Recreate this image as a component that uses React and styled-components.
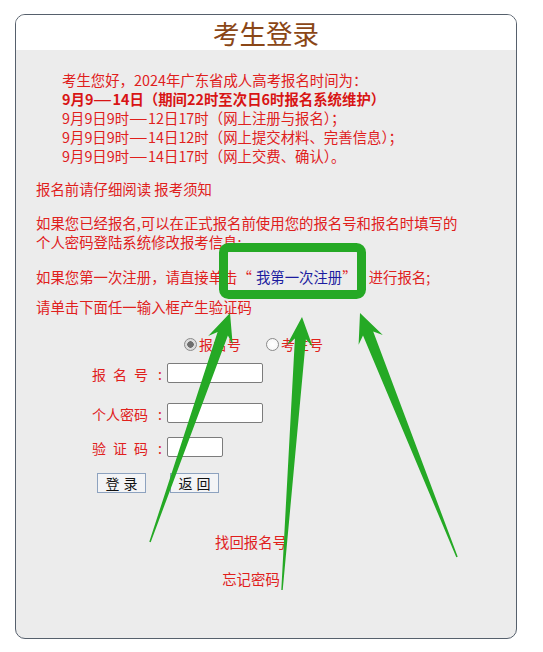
import React from "react";
import styled, { createGlobalStyle } from "styled-components";

const Global = createGlobalStyle`
  html, body { margin: 0; padding: 0; background: #ffffff; }
  body { font-family: "Noto Sans CJK SC", "Noto Sans", sans-serif; }
`;

const Page = styled.div`
  position: relative;
  width: 543px;
  height: 652px;
  padding: 14px 0 0 15px;
  box-sizing: border-box;
`;

const Card = styled.div`
  width: 502px;
  height: 625px;
  box-sizing: border-box;
  border: 1px solid #56606c;
  border-radius: 10px;
  overflow: hidden;
  background: #ececec;
  display: flex;
  flex-direction: column;
`;

const Header = styled.div`
  height: 35px;
  background: #ffffff;
  display: flex;
  align-items: center;
  justify-content: center;
`;

const Title = styled.h1`
  margin: 0;
  font-size: 26.5px;
  font-weight: 400;
  line-height: 35px;
  color: #8a4616;
  font-family: "Noto Sans CJK SC", sans-serif;
`;

const Body = styled.div`
  padding: 20px 0 0 20px;
  font-size: 14.4px;
  line-height: 19px;
  color: #e0201c;
`;

const Notice = styled.div`
  margin-left: 26px;
`;

const Line = styled.div`
  font-weight: ${(p) => (p.$bold ? 700 : 400)};
  color: ${(p) => (p.$bold ? "#d81414" : "#e0201c")};
  white-space: nowrap;
`;

const Dash = styled.span`
  display: inline-block;
  transform: scaleX(1.45);
  transform-origin: left center;
  margin-right: 6px;
`;

const Para = styled.p`
  margin: ${(p) => p.$top}px 0 0 0;
  white-space: nowrap;
`;

const Link = styled.span`
  color: #1c1ca0;
  margin-left: 4px;
`;

const Follow = styled.span`
  margin-left: ${(p) => p.$gap}px;
`;

const RadioRow = styled.div`
  margin-top: 19px;
  padding-left: 148px;
  display: flex;
  align-items: center;
  height: 19px;
  font-size: 14px;
`;

const RadioLabel = styled.label`
  display: flex;
  align-items: center;
  gap: 2px;
  margin-right: 25px;
  color: #e0201c;
`;

const Radio = styled.input.attrs({ type: "radio" })`
  appearance: none;
  margin: 0;
  width: 13px;
  height: 13px;
  border-radius: 50%;
  border: 1px solid #8a8a8a;
  background: radial-gradient(circle, #ffffff 0%, #f4f4f4 100%);
  box-sizing: border-box;
  &:checked {
    background: radial-gradient(circle, #6e6e6e 0 3px, #dcdcdc 3.5px 100%);
  }
`;

const Form = styled.div`
  padding-left: 56px;
  display: flex;
  flex-direction: column;
  font-size: 14px;
`;

const Row = styled.div`
  display: flex;
  align-items: center;
  gap: 5px;
  margin-top: ${(p) => p.$top}px;
  height: 20px;
`;

const Label = styled.span`
  width: 70px;
  display: flex;
  justify-content: space-between;
  white-space: nowrap;
  color: #e0201c;
  padding-top: 3px;
`;

const LabelText = styled.span`
  letter-spacing: ${(p) => p.$spread}px;
`;

const Field = styled.input`
  width: ${(p) => p.$w}px;
  height: 20px;
  box-sizing: border-box;
  border: 1px solid #7c7c7c;
  border-radius: 2px;
  background: #ffffff;
  margin: 0;
  padding: 0 2px;
`;

const Buttons = styled.div`
  margin-top: 16px;
  padding-left: 5px;
  display: flex;
  gap: 24px;
`;

const Button = styled.button`
  width: 49px;
  height: 20px;
  box-sizing: border-box;
  border: 1px solid #8da2bf;
  background: #f3f4f6;
  color: #111;
  font-family: "Noto Sans CJK SC", sans-serif;
  font-size: 14px;
  line-height: 18px;
  letter-spacing: 4px;
  padding: 0 0 0 4px;
  margin: 0;
`;

const Links = styled.div`
  margin-top: 39px;
  padding-right: 50px;
  display: flex;
  flex-direction: column;
  align-items: center;
  gap: 18px;
`;

const TextLink = styled.span`
  color: #e0201c;
`;

const Overlay = styled.svg`
  position: absolute;
  left: 0;
  top: 0;
  width: 543px;
  height: 652px;
  pointer-events: none;
`;

function arrowPoints(tip, tail, headLen = 26, headHalf = 13, shaftHalf = 5.5, tailHalf = 0.7) {
  const dx = tip[0] - tail[0];
  const dy = tip[1] - tail[1];
  const len = Math.hypot(dx, dy);
  const ux = dx / len;
  const uy = dy / len;
  const nx = -uy;
  const ny = ux;
  const bx = tip[0] - ux * headLen;
  const by = tip[1] - uy * headLen;
  const p = (x, y) => `${x.toFixed(1)},${y.toFixed(1)}`;
  return [
    p(tip[0], tip[1]),
    p(bx + nx * headHalf - ux * 3, by + ny * headHalf - uy * 3),
    p(bx + nx * shaftHalf + ux * 4, by + ny * shaftHalf + uy * 4),
    p(tail[0] + nx * tailHalf, tail[1] + ny * tailHalf),
    p(tail[0] - nx * tailHalf, tail[1] - ny * tailHalf),
    p(bx - nx * shaftHalf + ux * 4, by - ny * shaftHalf + uy * 4),
    p(bx - nx * headHalf - ux * 3, by - ny * headHalf - uy * 3),
  ].join(" ");
}

const arrows = [
  { tip: [230, 313], tail: [150, 542] },
  { tip: [302, 317], tail: [282, 590] },
  { tip: [360, 313], tail: [457, 557] },
];

export default function App() {
  return (
    <Page>
      <Global />
      <Card>
        <Header>
          <Title>考生登录</Title>
        </Header>
        <Body>
          <Notice>
            <Line>考生您好，2024年广东省成人高考报名时间为：</Line>
            <Line $bold>9月9<Dash>—</Dash>14日（期间22时至次日6时报名系统维护）</Line>
            <Line>9月9日9时<Dash>—</Dash>12日17时（网上注册与报名）；</Line>
            <Line>9月9日9时<Dash>—</Dash>14日12时（网上提交材料、完善信息）；</Line>
            <Line>9月9日9时<Dash>—</Dash>14日17时（网上交费、确认）。</Line>
          </Notice>
          <Para $top={14}>报名前请仔细阅读 报考须知</Para>
          <Para $top={15}>
            如果您已经报名,可以在正式报名前使用您的报名号和报名时填写的
            <br />
            个人密码登陆系统修改报考信息;
          </Para>
          <Para $top={16}>
            如果您第一次注册，请直接单击“<Link>我第一次注册</Link>”<Follow $gap={12}>进行报名;</Follow>
          </Para>
          <Para $top={11}>请单击下面任一输入框产生验证码</Para>
          <RadioRow>
            <RadioLabel>
              <Radio name="t" defaultChecked />
              报名号
            </RadioLabel>
            <RadioLabel>
              <Radio name="t" />
              考生号
            </RadioLabel>
          </RadioRow>
          <Form>
            <Row $top={9}>
              <Label>
                <LabelText $spread={7}>报名号</LabelText>
                <span>:</span>
              </Label>
              <Field $w={96} />
            </Row>
            <Row $top={20}>
              <Label>
                <LabelText $spread={0}>个人密码</LabelText>
                <span>:</span>
              </Label>
              <Field $w={96} />
            </Row>
            <Row $top={14}>
              <Label>
                <LabelText $spread={7}>验证码</LabelText>
                <span>:</span>
              </Label>
              <Field $w={56} />
            </Row>
            <Buttons>
              <Button>登录</Button>
              <Button>返回</Button>
            </Buttons>
          </Form>
          <Links>
            <TextLink>找回报名号</TextLink>
            <TextLink>忘记密码</TextLink>
          </Links>
        </Body>
      </Card>
      <Overlay viewBox="0 0 543 652">
        <rect x="223.5" y="247.5" width="138" height="47" rx="5" fill="none" stroke="#25a925" strokeWidth="9" />
        {arrows.map((a, i) => (
          <polygon key={i} points={arrowPoints(a.tip, a.tail)} fill="#25a925" />
        ))}
      </Overlay>
    </Page>
  );
}
